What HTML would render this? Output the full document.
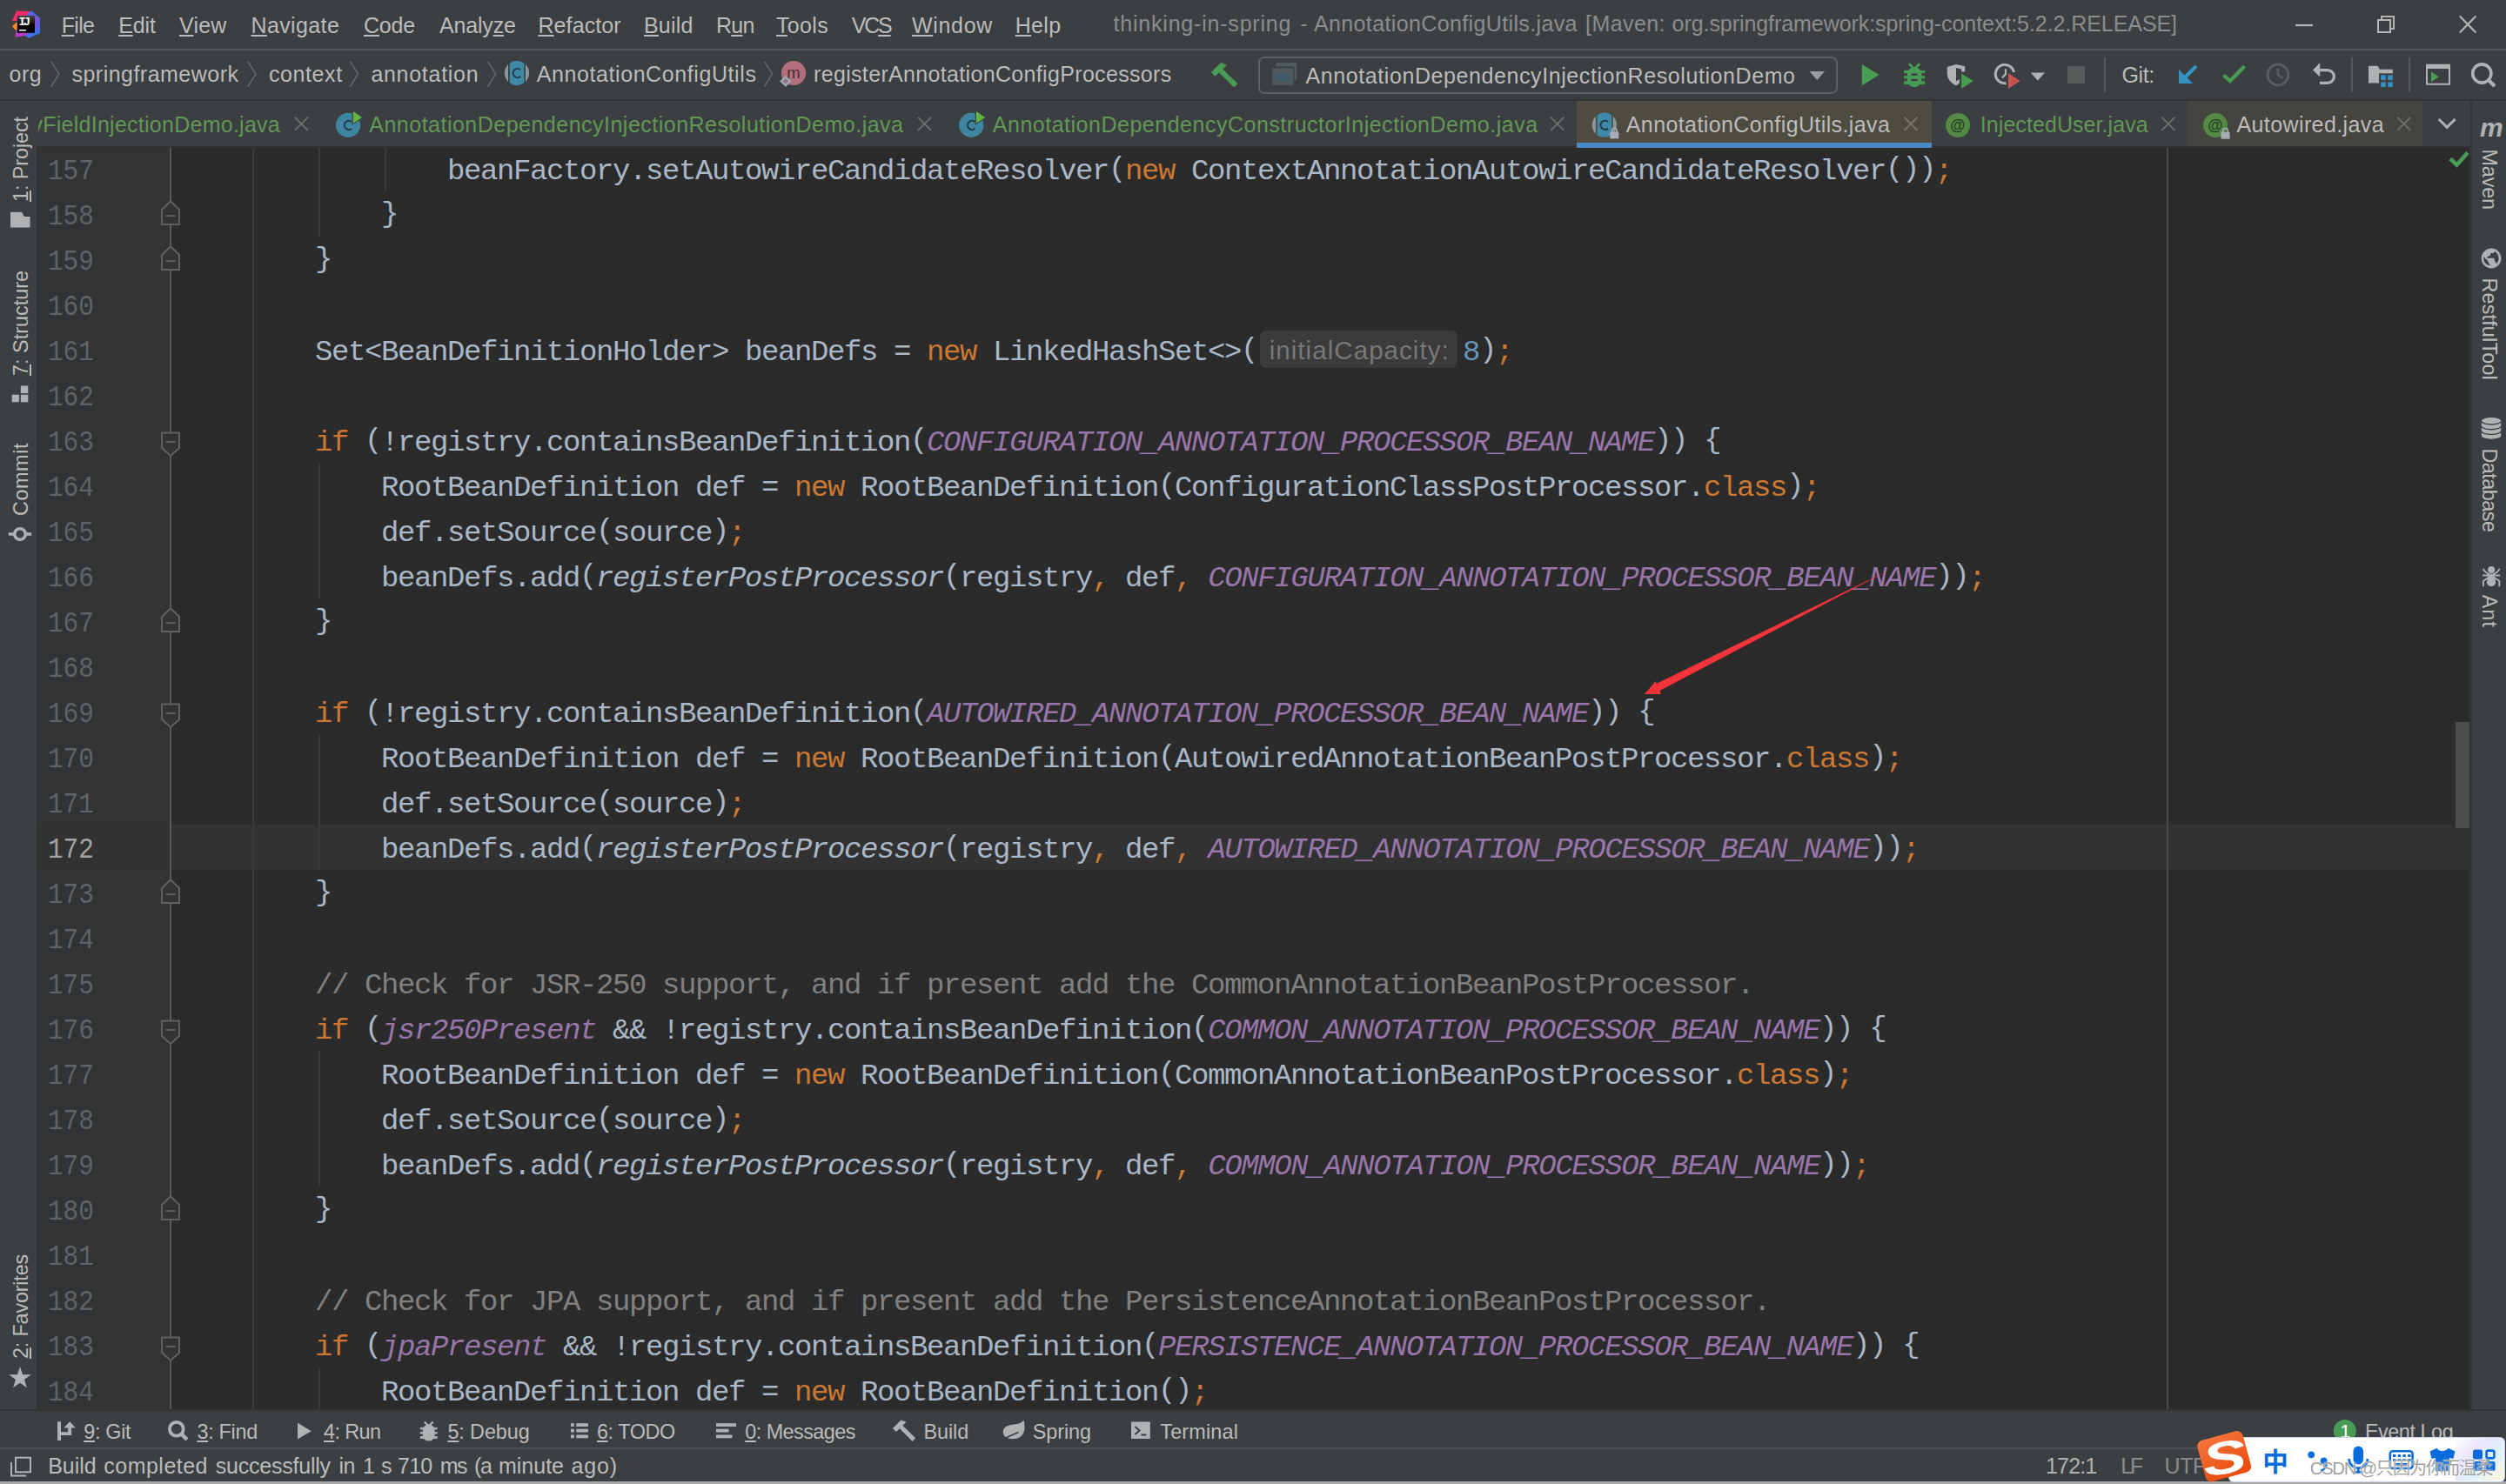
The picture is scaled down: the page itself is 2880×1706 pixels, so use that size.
<!DOCTYPE html>
<html lang="en"><head><meta charset="utf-8"><title>thinking-in-spring - AnnotationConfigUtils.java</title>
<style>
html,body{margin:0;padding:0;}
body{width:2880px;height:1706px;overflow:hidden;background:#3c3f41;position:relative;font-family:"Liberation Sans", sans-serif;}
.t{position:absolute;white-space:pre;font-family:"Liberation Sans", sans-serif;z-index:3;}
.z3{z-index:3;}.z4{z-index:4;}.z5{z-index:5;}
.a{position:absolute;}
u{text-decoration:underline;text-decoration-thickness:2px;text-underline-offset:1.5px;}
.code{position:absolute;white-space:pre;font-family:"Liberation Mono", monospace;color:#a9b7c6;}
.k{color:#cc7832;}
.c{color:#9876aa;font-style:italic;}
.i{font-style:italic;}
.m{color:#808080;}
.n{color:#6897bb;}
.ln{position:absolute;white-space:pre;font-family:"Liberation Mono", monospace;color:#606366;}
svg{position:absolute;overflow:visible;}
.rot{position:absolute;z-index:3;left:0;top:0;width:0;height:0;transform-origin:0 0;}
.code b{font-weight:normal;position:relative;top:-3px;}

</style></head><body>
<div class="a" style="left:0px;top:56px;width:2880px;height:2px;background:#535556;"></div>
<div class="a" style="left:0px;top:114px;width:2880px;height:2px;background:#323232;"></div>
<div class="a" style="left:42px;top:116px;width:2799px;height:52px;background:#3c3f41;"></div>
<div class="a" style="left:42px;top:168px;width:2799px;height:1452px;background:#2b2b2b;"></div>
<div class="a" style="left:42px;top:168px;width:154px;height:1452px;background:#313335;"></div>
<div class="a" style="left:196px;top:948px;width:2645px;height:52px;background:#323232;"></div>
<div class="a" style="left:42px;top:948px;width:154px;height:52px;background:#323232;"></div>
<div class="a" style="left:195px;top:170px;width:2px;height:1450px;background:#585858;"></div>
<div class="a" style="left:2490px;top:170px;width:2px;height:1450px;background:#4a4a4a;"></div>
<div class="a" style="left:2838px;top:168px;width:3px;height:1452px;background:#313335;"></div>
<div class="a" style="left:2822px;top:830px;width:16px;height:122px;background:#4e4e4e;"></div>
<div class="a" style="left:0px;top:116px;width:42px;height:1504px;background:#3c3f41;"></div>
<div class="a" style="left:2841px;top:116px;width:39px;height:1504px;background:#3c3f41;"></div>
<div class="a" style="left:2839px;top:116px;width:2px;height:52px;background:#323232;"></div>
<div class="a" style="left:0px;top:1620px;width:2880px;height:2px;background:#323232;"></div>
<div class="a" style="left:0px;top:1664px;width:2880px;height:2px;background:#4a4c4d;"></div>
<div class="a" style="left:0px;top:1703px;width:2880px;height:3px;background:#a9a9a9;"></div>
<div class="a" style="left:290px;top:170px;width:2px;height:1450px;background:#3b3b3b;"></div>
<div class="a" style="left:366px;top:170px;width:2px;height:102px;background:#393939;"></div>
<div class="a" style="left:442px;top:170px;width:2px;height:50px;background:#393939;"></div>
<div class="a" style="left:366px;top:532px;width:2px;height:156px;background:#393939;"></div>
<div class="a" style="left:366px;top:844px;width:2px;height:156px;background:#393939;"></div>
<div class="a" style="left:366px;top:1208px;width:2px;height:156px;background:#393939;"></div>
<div class="a" style="left:366px;top:1572px;width:2px;height:48px;background:#393939;"></div>
<div class="code" style="left:514.00px;top:170.94px;height:52px;line-height:52px;font-size:34.0px;letter-spacing:-1.4033px;">beanFactory.setAutowireCandidateResolver<b>(</b><span class="k">new</span> ContextAnnotationAutowireCandidateResolver<b>())</b><span class="k">;</span></div>
<div class="code" style="left:438.00px;top:222.94px;height:52px;line-height:52px;font-size:34.0px;letter-spacing:-1.4033px;"><b>}</b></div>
<div class="code" style="left:362.00px;top:274.94px;height:52px;line-height:52px;font-size:34.0px;letter-spacing:-1.4033px;"><b>}</b></div>
<div class="code" style="left:362.00px;top:482.94px;height:52px;line-height:52px;font-size:34.0px;letter-spacing:-1.4033px;"><span class="k">if</span> <b>(</b>!registry.containsBeanDefinition<b>(</b><span class="c">CONFIGURATION_ANNOTATION_PROCESSOR_BEAN_NAME</span><b>))</b> <b>{</b></div>
<div class="code" style="left:438.00px;top:534.94px;height:52px;line-height:52px;font-size:34.0px;letter-spacing:-1.4033px;">RootBeanDefinition def = <span class="k">new</span> RootBeanDefinition<b>(</b>ConfigurationClassPostProcessor.<span class="k">class</span><b>)</b><span class="k">;</span></div>
<div class="code" style="left:438.00px;top:586.94px;height:52px;line-height:52px;font-size:34.0px;letter-spacing:-1.4033px;">def.setSource<b>(</b>source<b>)</b><span class="k">;</span></div>
<div class="code" style="left:438.00px;top:638.94px;height:52px;line-height:52px;font-size:34.0px;letter-spacing:-1.4033px;">beanDefs.add<b>(</b><span class="i">registerPostProcessor</span><b>(</b>registry<span class="k">,</span> def<span class="k">,</span> <span class="c">CONFIGURATION_ANNOTATION_PROCESSOR_BEAN_NAME</span><b>))</b><span class="k">;</span></div>
<div class="code" style="left:362.00px;top:690.94px;height:52px;line-height:52px;font-size:34.0px;letter-spacing:-1.4033px;"><b>}</b></div>
<div class="code" style="left:362.00px;top:794.94px;height:52px;line-height:52px;font-size:34.0px;letter-spacing:-1.4033px;"><span class="k">if</span> <b>(</b>!registry.containsBeanDefinition<b>(</b><span class="c">AUTOWIRED_ANNOTATION_PROCESSOR_BEAN_NAME</span><b>))</b> <b>{</b></div>
<div class="code" style="left:438.00px;top:846.94px;height:52px;line-height:52px;font-size:34.0px;letter-spacing:-1.4033px;">RootBeanDefinition def = <span class="k">new</span> RootBeanDefinition<b>(</b>AutowiredAnnotationBeanPostProcessor.<span class="k">class</span><b>)</b><span class="k">;</span></div>
<div class="code" style="left:438.00px;top:898.94px;height:52px;line-height:52px;font-size:34.0px;letter-spacing:-1.4033px;">def.setSource<b>(</b>source<b>)</b><span class="k">;</span></div>
<div class="code" style="left:438.00px;top:950.94px;height:52px;line-height:52px;font-size:34.0px;letter-spacing:-1.4033px;">beanDefs.add<b>(</b><span class="i">registerPostProcessor</span><b>(</b>registry<span class="k">,</span> def<span class="k">,</span> <span class="c">AUTOWIRED_ANNOTATION_PROCESSOR_BEAN_NAME</span><b>))</b><span class="k">;</span></div>
<div class="code" style="left:362.00px;top:1002.94px;height:52px;line-height:52px;font-size:34.0px;letter-spacing:-1.4033px;"><b>}</b></div>
<div class="code" style="left:362.00px;top:1106.94px;height:52px;line-height:52px;font-size:34.0px;letter-spacing:-1.4033px;"><span class="m">// Check for JSR-250 support, and if present add the CommonAnnotationBeanPostProcessor.</span></div>
<div class="code" style="left:362.00px;top:1158.94px;height:52px;line-height:52px;font-size:34.0px;letter-spacing:-1.4033px;"><span class="k">if</span> <b>(</b><span class="c">jsr250Present</span> &amp;&amp; !registry.containsBeanDefinition<b>(</b><span class="c">COMMON_ANNOTATION_PROCESSOR_BEAN_NAME</span><b>))</b> <b>{</b></div>
<div class="code" style="left:438.00px;top:1210.94px;height:52px;line-height:52px;font-size:34.0px;letter-spacing:-1.4033px;">RootBeanDefinition def = <span class="k">new</span> RootBeanDefinition<b>(</b>CommonAnnotationBeanPostProcessor.<span class="k">class</span><b>)</b><span class="k">;</span></div>
<div class="code" style="left:438.00px;top:1262.94px;height:52px;line-height:52px;font-size:34.0px;letter-spacing:-1.4033px;">def.setSource<b>(</b>source<b>)</b><span class="k">;</span></div>
<div class="code" style="left:438.00px;top:1314.94px;height:52px;line-height:52px;font-size:34.0px;letter-spacing:-1.4033px;">beanDefs.add<b>(</b><span class="i">registerPostProcessor</span><b>(</b>registry<span class="k">,</span> def<span class="k">,</span> <span class="c">COMMON_ANNOTATION_PROCESSOR_BEAN_NAME</span><b>))</b><span class="k">;</span></div>
<div class="code" style="left:362.00px;top:1366.94px;height:52px;line-height:52px;font-size:34.0px;letter-spacing:-1.4033px;"><b>}</b></div>
<div class="code" style="left:362.00px;top:1470.94px;height:52px;line-height:52px;font-size:34.0px;letter-spacing:-1.4033px;"><span class="m">// Check for JPA support, and if present add the PersistenceAnnotationBeanPostProcessor.</span></div>
<div class="code" style="left:362.00px;top:1522.94px;height:52px;line-height:52px;font-size:34.0px;letter-spacing:-1.4033px;"><span class="k">if</span> <b>(</b><span class="c">jpaPresent</span> &amp;&amp; !registry.containsBeanDefinition<b>(</b><span class="c">PERSISTENCE_ANNOTATION_PROCESSOR_BEAN_NAME</span><b>))</b> <b>{</b></div>
<div class="code" style="left:438.00px;top:1574.94px;height:52px;line-height:52px;font-size:34.0px;letter-spacing:-1.4033px;">RootBeanDefinition def = <span class="k">new</span> RootBeanDefinition<b>()</b><span class="k">;</span></div>
<div class="code" style="left:362.00px;top:378.94px;height:52px;line-height:52px;font-size:34.0px;letter-spacing:-1.4033px;">Set&lt;BeanDefinitionHolder&gt; beanDefs = <span class="k">new</span> LinkedHashSet&lt;&gt;<b>(</b></div>
<div class="a" style="left:1448px;top:380px;width:227px;height:43px;border-radius:7px;background:#3b3b3b;"></div>
<span id="t0" class="t " style="left:1458.70px;top:386.10px;font-size:29.5px;line-height:33.895px;color:#787878;letter-spacing:1.056px;">initialCapacity:</span>
<div class="code" style="left:1681.00px;top:378.94px;height:52px;line-height:52px;font-size:34.0px;letter-spacing:-1.4033px;"><span class="n">8</span><b>)</b><span class="k">;</span></div>
<div class="ln" style="left:54.6px;top:170.94px;height:52px;line-height:52px;font-size:34.0px;color:#606366;transform:scaleX(0.863);transform-origin:0 0;">157</div>
<div class="ln" style="left:54.6px;top:222.94px;height:52px;line-height:52px;font-size:34.0px;color:#606366;transform:scaleX(0.863);transform-origin:0 0;">158</div>
<div class="ln" style="left:54.6px;top:274.94px;height:52px;line-height:52px;font-size:34.0px;color:#606366;transform:scaleX(0.863);transform-origin:0 0;">159</div>
<div class="ln" style="left:54.6px;top:326.94px;height:52px;line-height:52px;font-size:34.0px;color:#606366;transform:scaleX(0.863);transform-origin:0 0;">160</div>
<div class="ln" style="left:54.6px;top:378.94px;height:52px;line-height:52px;font-size:34.0px;color:#606366;transform:scaleX(0.863);transform-origin:0 0;">161</div>
<div class="ln" style="left:54.6px;top:430.94px;height:52px;line-height:52px;font-size:34.0px;color:#606366;transform:scaleX(0.863);transform-origin:0 0;">162</div>
<div class="ln" style="left:54.6px;top:482.94px;height:52px;line-height:52px;font-size:34.0px;color:#606366;transform:scaleX(0.863);transform-origin:0 0;">163</div>
<div class="ln" style="left:54.6px;top:534.94px;height:52px;line-height:52px;font-size:34.0px;color:#606366;transform:scaleX(0.863);transform-origin:0 0;">164</div>
<div class="ln" style="left:54.6px;top:586.94px;height:52px;line-height:52px;font-size:34.0px;color:#606366;transform:scaleX(0.863);transform-origin:0 0;">165</div>
<div class="ln" style="left:54.6px;top:638.94px;height:52px;line-height:52px;font-size:34.0px;color:#606366;transform:scaleX(0.863);transform-origin:0 0;">166</div>
<div class="ln" style="left:54.6px;top:690.94px;height:52px;line-height:52px;font-size:34.0px;color:#606366;transform:scaleX(0.863);transform-origin:0 0;">167</div>
<div class="ln" style="left:54.6px;top:742.94px;height:52px;line-height:52px;font-size:34.0px;color:#606366;transform:scaleX(0.863);transform-origin:0 0;">168</div>
<div class="ln" style="left:54.6px;top:794.94px;height:52px;line-height:52px;font-size:34.0px;color:#606366;transform:scaleX(0.863);transform-origin:0 0;">169</div>
<div class="ln" style="left:54.6px;top:846.94px;height:52px;line-height:52px;font-size:34.0px;color:#606366;transform:scaleX(0.863);transform-origin:0 0;">170</div>
<div class="ln" style="left:54.6px;top:898.94px;height:52px;line-height:52px;font-size:34.0px;color:#606366;transform:scaleX(0.863);transform-origin:0 0;">171</div>
<div class="ln" style="left:54.6px;top:950.94px;height:52px;line-height:52px;font-size:34.0px;color:#a4a3a3;transform:scaleX(0.863);transform-origin:0 0;">172</div>
<div class="ln" style="left:54.6px;top:1002.94px;height:52px;line-height:52px;font-size:34.0px;color:#606366;transform:scaleX(0.863);transform-origin:0 0;">173</div>
<div class="ln" style="left:54.6px;top:1054.94px;height:52px;line-height:52px;font-size:34.0px;color:#606366;transform:scaleX(0.863);transform-origin:0 0;">174</div>
<div class="ln" style="left:54.6px;top:1106.94px;height:52px;line-height:52px;font-size:34.0px;color:#606366;transform:scaleX(0.863);transform-origin:0 0;">175</div>
<div class="ln" style="left:54.6px;top:1158.94px;height:52px;line-height:52px;font-size:34.0px;color:#606366;transform:scaleX(0.863);transform-origin:0 0;">176</div>
<div class="ln" style="left:54.6px;top:1210.94px;height:52px;line-height:52px;font-size:34.0px;color:#606366;transform:scaleX(0.863);transform-origin:0 0;">177</div>
<div class="ln" style="left:54.6px;top:1262.94px;height:52px;line-height:52px;font-size:34.0px;color:#606366;transform:scaleX(0.863);transform-origin:0 0;">178</div>
<div class="ln" style="left:54.6px;top:1314.94px;height:52px;line-height:52px;font-size:34.0px;color:#606366;transform:scaleX(0.863);transform-origin:0 0;">179</div>
<div class="ln" style="left:54.6px;top:1366.94px;height:52px;line-height:52px;font-size:34.0px;color:#606366;transform:scaleX(0.863);transform-origin:0 0;">180</div>
<div class="ln" style="left:54.6px;top:1418.94px;height:52px;line-height:52px;font-size:34.0px;color:#606366;transform:scaleX(0.863);transform-origin:0 0;">181</div>
<div class="ln" style="left:54.6px;top:1470.94px;height:52px;line-height:52px;font-size:34.0px;color:#606366;transform:scaleX(0.863);transform-origin:0 0;">182</div>
<div class="ln" style="left:54.6px;top:1522.94px;height:52px;line-height:52px;font-size:34.0px;color:#606366;transform:scaleX(0.863);transform-origin:0 0;">183</div>
<div class="ln" style="left:54.6px;top:1574.94px;height:52px;line-height:52px;font-size:34.0px;color:#606366;transform:scaleX(0.863);transform-origin:0 0;">184</div>
<svg class="a" style="left:0;top:0" width="2880" height="1706"><path d="M186,258 H206 V241 L196,231.5 L186,241 Z" fill="#313335" stroke="#606060" stroke-width="2"/><path d="M190.5,248.2 H201.5" stroke="#606060" stroke-width="2"/></svg>
<svg class="a" style="left:0;top:0" width="2880" height="1706"><path d="M186,310 H206 V293 L196,283.5 L186,293 Z" fill="#313335" stroke="#606060" stroke-width="2"/><path d="M190.5,300.2 H201.5" stroke="#606060" stroke-width="2"/></svg>
<svg class="a" style="left:0;top:0" width="2880" height="1706"><path d="M186,726 H206 V709 L196,699.5 L186,709 Z" fill="#313335" stroke="#606060" stroke-width="2"/><path d="M190.5,716.2 H201.5" stroke="#606060" stroke-width="2"/></svg>
<svg class="a" style="left:0;top:0" width="2880" height="1706"><path d="M186,1038 H206 V1021 L196,1011.5 L186,1021 Z" fill="#313335" stroke="#606060" stroke-width="2"/><path d="M190.5,1028.2 H201.5" stroke="#606060" stroke-width="2"/></svg>
<svg class="a" style="left:0;top:0" width="2880" height="1706"><path d="M186,1402 H206 V1385 L196,1375.5 L186,1385 Z" fill="#313335" stroke="#606060" stroke-width="2"/><path d="M190.5,1392.2 H201.5" stroke="#606060" stroke-width="2"/></svg>
<svg class="a" style="left:0;top:0" width="2880" height="1706"><path d="M186,497.5 H206 V515 L196,524 L186,515 Z" fill="#313335" stroke="#606060" stroke-width="2"/><path d="M190.5,508 H201.5" stroke="#606060" stroke-width="2"/></svg>
<svg class="a" style="left:0;top:0" width="2880" height="1706"><path d="M186,809.5 H206 V827 L196,836 L186,827 Z" fill="#313335" stroke="#606060" stroke-width="2"/><path d="M190.5,820 H201.5" stroke="#606060" stroke-width="2"/></svg>
<svg class="a" style="left:0;top:0" width="2880" height="1706"><path d="M186,1173.5 H206 V1191 L196,1200 L186,1191 Z" fill="#313335" stroke="#606060" stroke-width="2"/><path d="M190.5,1184 H201.5" stroke="#606060" stroke-width="2"/></svg>
<svg class="a" style="left:0;top:0" width="2880" height="1706"><path d="M186,1537.5 H206 V1555 L196,1564 L186,1555 Z" fill="#313335" stroke="#606060" stroke-width="2"/><path d="M190.5,1548 H201.5" stroke="#606060" stroke-width="2"/></svg>
<svg class="a" style="left:0;top:0" width="2880" height="1706"><path d="M2172,655 L1903.5,786 L1902.7,783 L1890,798 L1908.8,798 L1907.5,794 Z" fill="#f5333b"/></svg>
<span id="t1" class="t " style="left:70.70px;top:15.08px;font-size:25.0px;line-height:28.725px;color:#bbbbbb;letter-spacing:-0.674px;"><u>F</u>ile</span>
<span id="t2" class="t " style="left:136.20px;top:15.08px;font-size:25.0px;line-height:28.725px;color:#bbbbbb;letter-spacing:-0.148px;"><u>E</u>dit</span>
<span id="t3" class="t " style="left:206.00px;top:15.08px;font-size:25.0px;line-height:28.725px;color:#bbbbbb;letter-spacing:0.213px;"><u>V</u>iew</span>
<span id="t4" class="t " style="left:288.50px;top:15.08px;font-size:25.0px;line-height:28.725px;color:#bbbbbb;letter-spacing:0.377px;"><u>N</u>avigate</span>
<span id="t5" class="t " style="left:418.00px;top:15.08px;font-size:25.0px;line-height:28.725px;color:#bbbbbb;letter-spacing:-0.195px;"><u>C</u>ode</span>
<span id="t6" class="t " style="left:504.90px;top:15.08px;font-size:25.0px;line-height:28.725px;color:#bbbbbb;letter-spacing:-0.150px;">Analy<u>z</u>e</span>
<span id="t7" class="t " style="left:618.40px;top:15.08px;font-size:25.0px;line-height:28.725px;color:#bbbbbb;letter-spacing:0.112px;"><u>R</u>efactor</span>
<span id="t8" class="t " style="left:740.00px;top:15.08px;font-size:25.0px;line-height:28.725px;color:#bbbbbb;letter-spacing:0.178px;"><u>B</u>uild</span>
<span id="t9" class="t " style="left:823.00px;top:15.08px;font-size:25.0px;line-height:28.725px;color:#bbbbbb;letter-spacing:-0.725px;">R<u>u</u>n</span>
<span id="t10" class="t " style="left:892.00px;top:15.08px;font-size:25.0px;line-height:28.725px;color:#bbbbbb;letter-spacing:0.325px;"><u>T</u>ools</span>
<span id="t11" class="t " style="left:978.70px;top:15.08px;font-size:25.0px;line-height:28.725px;color:#bbbbbb;letter-spacing:-2.174px;">VC<u>S</u></span>
<span id="t12" class="t " style="left:1048.00px;top:15.08px;font-size:25.0px;line-height:28.725px;color:#bbbbbb;letter-spacing:0.677px;"><u>W</u>indow</span>
<span id="t13" class="t " style="left:1166.70px;top:15.08px;font-size:25.0px;line-height:28.725px;color:#bbbbbb;letter-spacing:0.341px;"><u>H</u>elp</span>
<span id="t14" class="t " style="left:1279.50px;top:13.17px;font-size:25.0px;line-height:28.725px;color:#8c8c8c;letter-spacing:0.796px;">thinking-in-spring</span>
<span id="t15" class="t " style="left:1494.20px;top:13.17px;font-size:25.0px;line-height:28.725px;color:#8c8c8c;letter-spacing:-1.528px;">-</span>
<span id="t16" class="t " style="left:1510.00px;top:13.17px;font-size:25.0px;line-height:28.725px;color:#8c8c8c;letter-spacing:0.372px;">AnnotationConfigUtils.java</span>
<span id="t17" class="t " style="left:1822.00px;top:13.17px;font-size:25.0px;line-height:28.725px;color:#8c8c8c;letter-spacing:0.438px;">[Maven:</span>
<span id="t18" class="t " style="left:1921.60px;top:13.17px;font-size:25.0px;line-height:28.725px;color:#8c8c8c;letter-spacing:-0.065px;">org.springframework:spring-context:5.2.2.RELEASE]</span>
<span id="t19" class="t " style="left:21.40px;top:17.59px;font-size:13.4px;line-height:15.397px;color:#fff;letter-spacing:-2.539px;font-family:'Liberation Mono',monospace;font-weight:bold;">IJ</span>
<span id="t20" class="t " style="left:10.60px;top:70.97px;font-size:25.0px;line-height:28.725px;color:#bbbbbb;letter-spacing:0.520px;">org</span>
<span id="t21" class="t " style="left:82.50px;top:70.97px;font-size:25.0px;line-height:28.725px;color:#bbbbbb;letter-spacing:0.475px;">springframework</span>
<span id="t22" class="t " style="left:309.00px;top:70.97px;font-size:25.0px;line-height:28.725px;color:#bbbbbb;letter-spacing:0.584px;">context</span>
<span id="t23" class="t " style="left:426.40px;top:70.97px;font-size:25.0px;line-height:28.725px;color:#bbbbbb;letter-spacing:0.712px;">annotation</span>
<span id="t24" class="t " style="left:616.70px;top:70.97px;font-size:25.0px;line-height:28.725px;color:#bbbbbb;letter-spacing:0.589px;">AnnotationConfigUtils</span>
<span id="t25" class="t " style="left:935.00px;top:70.97px;font-size:25.0px;line-height:28.725px;color:#bbbbbb;letter-spacing:0.335px;">registerAnnotationConfigProcessors</span>
<span id="t26" class="t " style="left:904.30px;top:72.87px;font-size:18.6px;line-height:21.371px;color:#4a2832;letter-spacing:0.200px;">m</span>
<div class="a" style="left:1446px;top:65px;width:662px;height:39px;border:2px solid #5e6060;border-radius:7px;"></div>
<span id="t27" class="t " style="left:1500.50px;top:73.28px;font-size:25.0px;line-height:28.725px;color:#bbbbbb;letter-spacing:0.587px;">AnnotationDependencyInjectionResolutionDemo</span>
<div class="a" style="left:2418px;top:66px;width:2px;height:40px;background:#555759;"></div>
<span id="t28" class="t " style="left:2438.40px;top:71.58px;font-size:25.0px;line-height:28.725px;color:#bbbbbb;letter-spacing:-0.327px;">Git:</span>
<div class="a" style="left:2702px;top:66px;width:2px;height:40px;background:#555759;"></div>
<div class="a" style="left:2768px;top:66px;width:2px;height:40px;background:#555759;"></div>
<div class="a" style="left:1812px;top:116px;width:408px;height:48px;background:#4e4b41;"></div>
<div class="a" style="left:1812px;top:164px;width:408px;height:6px;background:#4a88c7;"></div>
<div class="a" style="left:2514px;top:116px;width:270px;height:52px;background:#45443e;"></div>
<div class="a" style="left:42px;top:168px;width:2799px;height:2px;background:#323232;"></div>
<div class="a" style="left:1812px;top:164px;width:408px;height:6px;background:#4a88c7;"></div>
<span id="t29" class="t " style="left:36.50px;top:129.38px;font-size:25.0px;line-height:28.725px;color:#629755;letter-spacing:0.258px;">yFieldInjectionDemo.java</span>
<span id="t30" class="t " style="left:424.30px;top:129.38px;font-size:25.0px;line-height:28.725px;color:#629755;letter-spacing:0.490px;">AnnotationDependencyInjectionResolutionDemo.java</span>
<span id="t31" class="t " style="left:1140.80px;top:129.38px;font-size:25.0px;line-height:28.725px;color:#629755;letter-spacing:0.511px;">AnnotationDependencyConstructorInjectionDemo.java</span>
<span id="t32" class="t " style="left:1868.80px;top:129.38px;font-size:25.0px;line-height:28.725px;color:#bbbbbb;letter-spacing:0.395px;">AnnotationConfigUtils.java</span>
<span id="t33" class="t " style="left:2241.20px;top:133.56px;font-size:17.5px;line-height:20.108px;color:#26401f;letter-spacing:0.522px;font-weight:bold;">@</span>
<span id="t34" class="t " style="left:2275.80px;top:129.38px;font-size:25.0px;line-height:28.725px;color:#629755;letter-spacing:0.066px;">InjectedUser.java</span>
<span id="t35" class="t " style="left:2537.20px;top:133.56px;font-size:17.5px;line-height:20.108px;color:#26401f;letter-spacing:0.522px;font-weight:bold;">@</span>
<span id="t36" class="t " style="left:2570.50px;top:129.38px;font-size:25.0px;line-height:28.725px;color:#bbbbbb;letter-spacing:0.394px;">Autowired.java</span>
<div class="a" style="left:0px;top:116px;width:44px;height:52px;background:#3c3f41;z-index:3;"></div>
<div class="rot" style="transform:rotate(-90deg)"><span id="t37" class="t " style="left:-232.00px;top:11.42px;font-size:23.4px;line-height:26.887px;color:#bbbbbb;letter-spacing:-0.081px;"><u>1</u>: Project</span></div>
<div class="rot" style="transform:rotate(-90deg)"><span id="t38" class="t " style="left:-432.00px;top:11.42px;font-size:23.4px;line-height:26.887px;color:#bbbbbb;letter-spacing:0.007px;"><u>7</u>: Structure</span></div>
<div class="rot" style="transform:rotate(-90deg)"><span id="t39" class="t " style="left:-593.00px;top:11.42px;font-size:23.4px;line-height:26.887px;color:#bbbbbb;letter-spacing:0.570px;">Commit</span></div>
<div class="rot" style="transform:rotate(-90deg)"><span id="t40" class="t " style="left:-1562.00px;top:11.42px;font-size:23.4px;line-height:26.887px;color:#bbbbbb;letter-spacing:-0.184px;"><u>2</u>: Favorites</span></div>
<span id="t41" class="t " style="left:2850.00px;top:130.45px;font-size:30px;line-height:34.470px;color:#afb1b3;letter-spacing:-0.688px;font-weight:bold;font-style:italic;">m</span>
<div class="rot" style="transform:rotate(90deg)"><span id="t42" class="t " style="left:171.50px;top:-2873.58px;font-size:23.4px;line-height:26.887px;color:#bbbbbb;letter-spacing:-0.144px;">Maven</span></div>
<div class="rot" style="transform:rotate(90deg)"><span id="t43" class="t " style="left:319.40px;top:-2873.58px;font-size:23.4px;line-height:26.887px;color:#bbbbbb;letter-spacing:0.171px;">RestfulTool</span></div>
<div class="rot" style="transform:rotate(90deg)"><span id="t44" class="t " style="left:515.50px;top:-2873.58px;font-size:23.4px;line-height:26.887px;color:#bbbbbb;letter-spacing:-0.530px;">Database</span></div>
<div class="rot" style="transform:rotate(90deg)"><span id="t45" class="t " style="left:683.70px;top:-2873.58px;font-size:23.4px;line-height:26.887px;color:#bbbbbb;letter-spacing:1.064px;">Ant</span></div>
<span id="t46" class="t " style="left:96.30px;top:1633.02px;font-size:23.4px;line-height:26.887px;color:#bbbbbb;letter-spacing:-0.318px;"><u>9</u>: Git</span>
<span id="t47" class="t " style="left:226.40px;top:1633.02px;font-size:23.4px;line-height:26.887px;color:#bbbbbb;letter-spacing:-0.274px;"><u>3</u>: Find</span>
<span id="t48" class="t " style="left:372.00px;top:1633.02px;font-size:23.4px;line-height:26.887px;color:#bbbbbb;letter-spacing:-0.590px;"><u>4</u>: Run</span>
<span id="t49" class="t " style="left:514.40px;top:1633.02px;font-size:23.4px;line-height:26.887px;color:#bbbbbb;letter-spacing:-0.094px;"><u>5</u>: Debug</span>
<span id="t50" class="t " style="left:686.00px;top:1633.02px;font-size:23.4px;line-height:26.887px;color:#bbbbbb;letter-spacing:-0.407px;"><u>6</u>: TODO</span>
<span id="t51" class="t " style="left:856.30px;top:1633.02px;font-size:23.4px;line-height:26.887px;color:#bbbbbb;letter-spacing:-0.557px;"><u>0</u>: Messages</span>
<span id="t52" class="t " style="left:1061.50px;top:1633.02px;font-size:23.4px;line-height:26.887px;color:#bbbbbb;letter-spacing:-0.063px;">Build</span>
<span id="t53" class="t " style="left:1186.80px;top:1633.02px;font-size:23.4px;line-height:26.887px;color:#bbbbbb;letter-spacing:-0.071px;">Spring</span>
<span id="t54" class="t " style="left:1333.30px;top:1633.02px;font-size:23.4px;line-height:26.887px;color:#bbbbbb;letter-spacing:0.164px;">Terminal</span>
<span id="t55" class="t " style="left:2689.30px;top:1633.29px;font-size:22px;line-height:25.278px;color:#ffffff;letter-spacing:-1.750px;">1</span>
<span id="t56" class="t " style="left:2717.90px;top:1633.02px;font-size:23.4px;line-height:26.887px;color:#bbbbbb;letter-spacing:-0.449px;">Event Log</span>
<span id="t57" class="t " style="left:55.20px;top:1670.67px;font-size:25.0px;line-height:28.725px;color:#bbbbbb;letter-spacing:-0.039px;">Build</span>
<span id="t58" class="t " style="left:119.30px;top:1670.67px;font-size:25.0px;line-height:28.725px;color:#bbbbbb;letter-spacing:0.482px;">completed</span>
<span id="t59" class="t " style="left:247.70px;top:1670.67px;font-size:25.0px;line-height:28.725px;color:#bbbbbb;letter-spacing:-0.214px;">successfully</span>
<span id="t60" class="t " style="left:389.40px;top:1670.67px;font-size:25.0px;line-height:28.725px;color:#bbbbbb;letter-spacing:-0.434px;">in</span>
<span id="t61" class="t " style="left:417.00px;top:1670.67px;font-size:25.0px;line-height:28.725px;color:#bbbbbb;letter-spacing:-3.306px;">1</span>
<span id="t62" class="t " style="left:438.00px;top:1670.67px;font-size:25.0px;line-height:28.725px;color:#bbbbbb;letter-spacing:-3.500px;">s</span>
<span id="t63" class="t " style="left:457.00px;top:1670.67px;font-size:25.0px;line-height:28.725px;color:#bbbbbb;letter-spacing:-0.740px;">710</span>
<span id="t64" class="t " style="left:505.70px;top:1670.67px;font-size:25.0px;line-height:28.725px;color:#bbbbbb;letter-spacing:-1.514px;">ms</span>
<span id="t65" class="t " style="left:545.00px;top:1670.67px;font-size:25.0px;line-height:28.725px;color:#bbbbbb;letter-spacing:-1.267px;">(a</span>
<span id="t66" class="t " style="left:573.00px;top:1670.67px;font-size:25.0px;line-height:28.725px;color:#bbbbbb;letter-spacing:-0.008px;">minute</span>
<span id="t67" class="t " style="left:656.60px;top:1670.67px;font-size:25.0px;line-height:28.725px;color:#bbbbbb;letter-spacing:0.788px;">ago)</span>
<span id="t68" class="t " style="left:2351.00px;top:1670.97px;font-size:25.0px;line-height:28.725px;color:#b0b0b0;letter-spacing:-0.832px;">172:1</span>
<span id="t69" class="t " style="left:2437.30px;top:1670.97px;font-size:25.0px;line-height:28.725px;color:#8a8a8a;letter-spacing:-3.094px;">LF</span>
<span id="t70" class="t " style="left:2487.60px;top:1670.97px;font-size:25.0px;line-height:28.725px;color:#8a8a8a;letter-spacing:-0.486px;">UTF-8</span>
<svg class="a" style="left:0;top:0" width="2880" height="1706" viewBox="0 0 2880 1706"><path d="M2638,29 H2658" stroke="#b4b4b4" stroke-width="2.2" fill="none"/><path d="M2733,23 H2747 V37 H2733 Z M2737,22 V19 H2751 V33 H2748" stroke="#b4b4b4" stroke-width="2" fill="none"/><path d="M2826.8,18.6 L2845.4,37.4 M2845.4,18.6 L2826.8,37.4" stroke="#b4b4b4" stroke-width="2.2" fill="none"/><g>
<path d="M14,24 L19,12.5 L34,13 L30,24 Z" fill="#fc2a6b"/>
<path d="M30,18 L36,12 L46,21 L46,38 L33,44 L27,40 Z" fill="#3f6ff0"/>
<path d="M36,14 L46,22 L43,34 L34,26 Z" fill="#8a47d6" opacity=".75"/>
<path d="M14,30 L20,25 L22,34 L18,35 Z" fill="#fc8a1f"/>
<path d="M19,34 L34,38 L28,41 L17,43 Z" fill="#b63bc9"/>
<defs><linearGradient id="ijg" x1="0" y1="0" x2="0" y2="1"><stop offset="0" stop-color="#454545"/><stop offset=".6" stop-color="#000"/></linearGradient></defs><rect x="19.8" y="18" width="20.2" height="19.8" fill="url(#ijg)"/>
<rect x="22" y="34" width="8" height="1.5" fill="#fff"/>
</g><path d="M58.6,70.6 L67.8,85 L58.6,99.6" stroke="#5f6467" stroke-width="1.7" fill="none"/><path d="M284.8,70.6 L294,85 L284.8,99.6" stroke="#5f6467" stroke-width="1.7" fill="none"/><path d="M402.3,70.6 L411.5,85 L402.3,99.6" stroke="#5f6467" stroke-width="1.7" fill="none"/><path d="M560.5,70.6 L569.7,85 L560.5,99.6" stroke="#5f6467" stroke-width="1.7" fill="none"/><path d="M878.4,70.6 L887.6,85 L878.4,99.6" stroke="#5f6467" stroke-width="1.7" fill="none"/><clipPath id="cla"><rect x="585.8" y="69.9" width="16.5" height="28.2"/></clipPath><circle cx="594" cy="84" r="14.1" fill="#8a97a1"/><rect x="584" y="69.9" width="20" height="28.2" fill="#3c3f41"/><circle cx="594" cy="84" r="14.1" fill="#3f89a6" clip-path="url(#cla)"/><path d="M598.2,80.3 A5.1,5.1 0 1 0 598.2,87.9" stroke="#223b49" stroke-width="2.1" fill="none"/><circle cx="912" cy="84" r="14.1" fill="#b36e7c"/><path d="M902.9,86.6 L909.6,93.3 L902.9,100 L896.2,93.3 Z" fill="#9aa7b0"/><path d="M902.9,91 L905.2,93.3 L902.9,95.6 L900.6,93.3 Z" fill="#b36e7c" stroke="#4f4048" stroke-width=".6"/><g transform="translate(1392,72) scale(1.0)" fill="#499c54"><path d="M0,11 L11,0 L18,2.6 L13.2,7.4 L30.4,24.2 L26.2,28.4 L9.2,11.4 L4.4,15.8 Z"/></g><path d="M1466.2,74.2 H1487.8 V91.9" stroke="#4f585d" stroke-width="4.4" fill="none"/><rect x="1460.6" y="76.6" width="27" height="22.8" fill="#3c3f41"/><rect x="1462.2" y="78.3" width="24" height="19.5" fill="#4f595e"/><rect x="1466.2" y="84" width="16" height="10.2" fill="#3f5b69"/><path d="M2079.6,81.9 H2097 L2088.3,91.9 Z" fill="#9a9da0"/><path d="M2139.8,73.9 L2159.7,86 L2139.8,98.3 Z" fill="#499c54"/><g transform="translate(2188,72) scale(1.0)" fill="#499c54"><path d="M6,1.2 L12.1,7.4 L18.2,1.2" stroke="#499c54" stroke-width="2.7" fill="none"/><path d="M3.7,13.5 A8.4,8.6 0 0 1 20.5,13.5 V20 A8.4,8.2 0 0 1 3.7,20 Z"/><rect x="0" y="9" width="24.2" height="3"/><rect x="0" y="15.2" width="24.2" height="3"/><rect x="0" y="21.3" width="24.2" height="3.6"/><rect x="8.5" y="12.4" width="7.2" height="2.5" fill="#3c3f41"/><rect x="8.5" y="18.8" width="7.2" height="2.5" fill="#3c3f41"/></g><path d="M2237.8,77 L2248,73.9 L2258.2,76.3 V82.6 H2254.2 V79.4 L2248,78 V93.5 L2251.8,91 V95.8 L2248,98.4 C2241,95 2237.8,90 2237.8,84 Z" fill="#afb1b3"/><path d="M2254.1,84.4 L2267.7,93 L2254.1,102.1 Z" fill="#499c54"/><path d="M2314.5,83 A10.7,10.7 0 1 0 2305.6,95.7" stroke="#afb1b3" stroke-width="3" fill="none"/><path d="M2305,79.3 V85.3 L2300.8,89.5" stroke="#afb1b3" stroke-width="2.2" fill="none"/><path d="M2308,84 L2321.7,93 L2308,102 Z" fill="#c75450"/><path d="M2333.7,83.6 H2350 L2341.8,92.4 Z" fill="#afb1b3"/><rect x="2376" y="76" width="20" height="20" fill="#595b5d"/><path d="M2524,76 L2508,92" stroke="#3592c4" stroke-width="4" fill="none"/><path d="M2504,80 V96 H2520 Z" fill="#3592c4"/><path d="M2555.5,86.5 L2563,93 L2579.5,76" stroke="#499c54" stroke-width="4.2" fill="none"/><circle cx="2617.9" cy="85.9" r="11.8" stroke="#5a5d5f" stroke-width="3" fill="none"/><path d="M2617.9,78.5 V86 L2623.5,90" stroke="#5a5d5f" stroke-width="2.6" fill="none"/><path d="M2658,80.4 L2666.2,72.3 V88.5 Z" fill="#afb1b3"/><path d="M2665,80.6 H2675 A7.4,7.4 0 0 1 2675,95.4 H2666" stroke="#afb1b3" stroke-width="3.2" fill="none"/><path d="M2722,75.8 H2732.5 L2735,79.8 H2749.8 V95.5 H2722 Z" fill="#afb1b3"/><rect x="2734" y="84.3" width="18" height="17.7" fill="#3c3f41"/><rect x="2736.2" y="86.4" width="5.6" height="5.6" fill="#3592c4"/><rect x="2744.2" y="86.4" width="5.6" height="5.6" fill="#3592c4"/><rect x="2736.2" y="94.4" width="5.6" height="5.6" fill="#3592c4"/><rect x="2744.2" y="94.4" width="5.6" height="5.6" fill="#3592c4"/><path d="M2788,73.8 H2816 V97.8 H2788 Z M2790,79 V95.8 H2814 V79 Z" fill="#afb1b3" fill-rule="evenodd"/><path d="M2794,82.6 L2802.7,88.3 L2794,94.2 Z" fill="#499c54"/><circle cx="2852.3" cy="84.5" r="10.6" stroke="#afb1b3" stroke-width="3.6" fill="none"/><path d="M2859.6,91.8 L2867,99.1" stroke="#afb1b3" stroke-width="4.2" fill="none"/><path d="M338.8,134.8 l15,15 m0,-15 l-15,15" stroke="#6e6e6e" stroke-width="1.9" fill="none"/><circle cx="400.1" cy="143.9" r="14.1" fill="#3e86a0"/><path d="M404.3,140.20000000000002 A5.1,5.1 0 1 0 404.3,147.8" stroke="#223b49" stroke-width="2.1" fill="none"/><path d="M404.6,126.0 L418.0,135.1 L404.6,143.70000000000002 Z" fill="#3c3f41"/><path d="M405.8,128.0 L416.0,135.1 L405.8,141.70000000000002 Z" fill="#62b543"/><path d="M1055,134.8 l15,15 m0,-15 l-15,15" stroke="#6e6e6e" stroke-width="1.9" fill="none"/><circle cx="1116.3" cy="143.9" r="14.1" fill="#3e86a0"/><path d="M1120.5,140.20000000000002 A5.1,5.1 0 1 0 1120.5,147.8" stroke="#223b49" stroke-width="2.1" fill="none"/><path d="M1120.8,126.0 L1134.2,135.1 L1120.8,143.70000000000002 Z" fill="#3c3f41"/><path d="M1122.0,128.0 L1132.2,135.1 L1122.0,141.70000000000002 Z" fill="#62b543"/><path d="M1782.3,134.8 l15,15 m0,-15 l-15,15" stroke="#6e6e6e" stroke-width="1.9" fill="none"/><clipPath id="clb"><rect x="1835.6" y="129.6" width="16.5" height="28.2"/></clipPath><circle cx="1843.8" cy="143.7" r="14.1" fill="#8a97a1"/><rect x="1833.8" y="129.6" width="20" height="28.2" fill="#4e4b41"/><circle cx="1843.8" cy="143.7" r="14.1" fill="#3f89a6" clip-path="url(#clb)"/><path d="M1848.0,140.0 A5.1,5.1 0 1 0 1848.0,147.6" stroke="#223b49" stroke-width="2.1" fill="none"/><path d="M1852.6,151.89999999999998 V149.89999999999998 A2.7,2.7 0 0 1 1858.0,149.89999999999998 V151.89999999999998" stroke="#a7adb3" stroke-width="1.6" fill="none"/><rect x="1850.3" y="151.39999999999998" width="10" height="8" fill="#a7adb3"/><path d="M2188.5,134.8 l15,15 m0,-15 l-15,15" stroke="#767670" stroke-width="1.9" fill="none"/><circle cx="2250" cy="144" r="14" fill="#548a46"/><path d="M2484.3,134.8 l15,15 m0,-15 l-15,15" stroke="#6e6e6e" stroke-width="1.9" fill="none"/><circle cx="2546" cy="144" r="14" fill="#548a46"/><path d="M2554.8,152.2 V150.2 A2.7,2.7 0 0 1 2560.2,150.2 V152.2" stroke="#a7adb3" stroke-width="1.6" fill="none"/><rect x="2552.5" y="151.7" width="10" height="8" fill="#a7adb3"/><path d="M2755.3,134.8 l15,15 m0,-15 l-15,15" stroke="#6e6e6e" stroke-width="1.9" fill="none"/><path d="M2802.8,137 L2812.2,146.3 L2821.6,137" stroke="#afb1b3" stroke-width="3" fill="none"/><path d="M2816,182.5 L2823.5,189.5 L2836,175.5" stroke="#499c54" stroke-width="4.6" fill="none"/><path d="M12,243.7 H25 L28,249 H34.5 V261.5 H12 Z" fill="#afb1b3"/><rect x="23.8" y="443.5" width="8.5" height="8.6" fill="#afb1b3"/><rect x="13.7" y="453.7" width="8.2" height="8.6" fill="#afb1b3"/><rect x="23.8" y="453.7" width="8.5" height="8.6" fill="#afb1b3"/><circle cx="23" cy="614" r="6.3" stroke="#afb1b3" stroke-width="3.6" fill="none"/><path d="M9.8,614 H16 M30,614 H36.2" stroke="#afb1b3" stroke-width="3.6"/><path d="M23,1571 L26.1,1580.3 L35.8,1580.3 L28,1586.1 L30.9,1595.3 L23,1589.7 L15.1,1595.3 L18,1586.1 L10.2,1580.3 L19.9,1580.3 Z" fill="#afb1b3"/><circle cx="2863.1" cy="297" r="11.4" fill="#afb1b3"/><path d="M2867,289 L2865.6,290.9 L2862.2,291.1 L2862.2,293.6 L2858.4,295.3 L2858.4,296.7 L2866.3,296.7 L2867,300.3 L2869.3,302.9 A9.1,9.1 0 0 0 2867,289 Z" fill="#3c3f41"/><path d="M2854.2,295.1 A9.1,9.1 0 0 0 2861.7,305.6 L2861.7,304.4 L2859.9,302.3 L2859.4,300.3 Z" fill="#3c3f41"/><path d="M2851.8,483.8 A11.2,3.7 0 0 1 2874.2,483.8 V501 A11.2,3.7 0 0 1 2851.8,501 Z" fill="#afb1b3"/><path d="M2851.8,484.3 A11.2,3.7 0 0 0 2874.2,484.3 M2851.8,490 A11.2,3.7 0 0 0 2874.2,490 M2851.8,495.7 A11.2,3.7 0 0 0 2874.2,495.7" stroke="#3c3f41" stroke-width="1.4" fill="none"/><circle cx="2863.1" cy="655" r="4" fill="#afb1b3"/><path d="M2863.1,659 C2866,662 2868.2,666 2868.2,669.3 A5.1,4.9 0 0 1 2858,669.3 C2858,666 2860.2,662 2863.1,659 Z" fill="#afb1b3"/><path d="M2853,661.5 H2873.2 M2861.5,660.5 C2857.5,659 2855,656.5 2853.6,653.9 M2864.7,660.5 C2868.7,659 2871.2,656.5 2872.6,653.9 M2861,663 L2853.9,668 V674.2 M2865.2,663 L2872.3,668 V674.2" stroke="#afb1b3" stroke-width="1.9" fill="none"/><path d="M66,1634.2 H70 V1656 H66 Z M70,1646.3 H78.2 V1641.4 H73.2 L80.2,1634.2 L86.9,1641.4 H82.1 V1650 H70 Z" fill="#afb1b3"/><circle cx="202.8" cy="1642.8" r="7.9" stroke="#afb1b3" stroke-width="3.8" fill="none"/><path d="M208.6,1648.6 L215,1655" stroke="#afb1b3" stroke-width="4.4" fill="none"/><path d="M342,1635.8 L357.8,1645.2 L342,1654.5 Z" fill="#afb1b3"/><g transform="translate(482.8,1633.5) scale(0.82)" fill="#afb1b3"><path d="M6,1.2 L12.1,7.4 L18.2,1.2" stroke="#afb1b3" stroke-width="2.7" fill="none"/><path d="M3.7,13.5 A8.4,8.6 0 0 1 20.5,13.5 V20 A8.4,8.2 0 0 1 3.7,20 Z"/><rect x="0" y="9" width="24.2" height="3"/><rect x="0" y="15.2" width="24.2" height="3"/><rect x="0" y="21.3" width="24.2" height="3.6"/><rect x="8.5" y="12.4" width="7.2" height="2.5" fill="#afb1b3"/><rect x="8.5" y="18.8" width="7.2" height="2.5" fill="#afb1b3"/></g><path d="M656,1636.2 h3.8 v3.8 h-3.8 Z M662.3,1636.2 h13.6 v3.8 h-13.6 Z M656,1642.8 h3.8 v3.8 h-3.8 Z M662.3,1642.8 h13.6 v3.8 h-13.6 Z M656,1649.4 h3.8 v3.8 h-3.8 Z M662.3,1649.4 h13.6 v3.8 h-13.6 Z " fill="#afb1b3"/><path d="M823,1636.2 h23 v3.8 h-23 Z M823,1642.8 h14.5 v3.8 h-14.5 Z M823,1649.4 h18.5 v3.8 h-18.5 Z" fill="#afb1b3"/><g transform="translate(1026,1632.5) scale(0.86)" fill="#afb1b3"><path d="M0,11 L11,0 L18,2.6 L13.2,7.4 L30.4,24.2 L26.2,28.4 L9.2,11.4 L4.4,15.8 Z"/></g><path d="M1176.6,1632.8 C1179,1643 1177.5,1654.3 1163.5,1654.3 C1156.5,1654.3 1152.8,1650.5 1152.8,1646.3 C1152.8,1640 1159,1638.3 1165,1637.6 C1170,1637 1174,1636 1176.6,1632.8 Z" fill="#afb1b3"/><path d="M1153.2,1655 C1157,1651.8 1163,1649.8 1170.5,1646.5" stroke="#3c3f41" stroke-width="1.5" fill="none"/><rect x="1300" y="1634.5" width="21.8" height="19.5" fill="#afb1b3"/><path d="M1304.5,1640 L1309.5,1644.5 L1304.5,1649 M1311.5,1649.5 H1317.5" stroke="#3c3f41" stroke-width="2" fill="none"/><circle cx="2694.8" cy="1645" r="13" fill="#499c54"/><rect x="18" y="1675.7" width="17" height="16.6" stroke="#afb1b3" stroke-width="2" fill="none"/><path d="M13,1681 V1696.6 H30" stroke="#afb1b3" stroke-width="2" fill="none"/></svg>
<div class="a z4" style="left:2562px;top:1652.5px;width:316px;height:50px;background:#fff;border-radius:5px;box-shadow:0 0 0 1px #c9d3ee;"></div>
<div class="a z4" style="left:2822px;top:1653px;width:56px;height:49px;border-radius:0 5px 5px 0;background:linear-gradient(135deg,#ffffff 0%,#ece4ff 35%,#dff0ff 60%,#fff6d8 100%);"></div>
<span class="t z5" style="left:2538.5px;top:1645.6px;font-size:53px;line-height:60.9px;color:#fff;font-weight:bold;font-style:italic;transform:rotate(-9deg) scaleX(1.42);transform-origin:50% 55%;">S</span>
<span id="t71" class="t z5" style="left:2600.20px;top:1664.24px;font-size:29.5px;line-height:33.895px;color:#0a6cdc;letter-spacing:-0.716px;font-family:'Liberation Sans','Noto Sans CJK SC',sans-serif;font-weight:bold;">中</span>
<svg class="a z4" style="left:0;top:0" width="2880" height="1706" viewBox="0 0 2880 1706"><g transform="translate(2556.2,1674.2) rotate(-15.2)"><defs><linearGradient id="sg" x1="0" y1="0" x2="0.3" y2="1"><stop offset="0" stop-color="#f8763e"/><stop offset="1" stop-color="#e94e10"/></linearGradient></defs><rect x="-27" y="-24.5" width="54" height="49" rx="7" fill="url(#sg)"/></g><circle cx="2656.2" cy="1672.3" r="3.9" fill="#0a6cdc"/><circle cx="2670.6" cy="1679.5" r="3.9" fill="#0a6cdc"/><path d="M2673.5,1681 C2674,1686 2671,1689.5 2667,1691" stroke="#0a6cdc" stroke-width="2.6" fill="none"/><rect x="2704.5" y="1662.5" width="11.6" height="21" rx="5.8" fill="#0a6cdc"/><path d="M2699.6,1677 A10.7,10.7 0 0 0 2721,1677" stroke="#0a6cdc" stroke-width="2.8" fill="none"/><path d="M2710.3,1687 V1693.5 M2705,1692.3 H2715.6" stroke="#0a6cdc" stroke-width="2.8" fill="none"/><rect x="2746.8" y="1668.2" width="25.8" height="19.8" rx="3" stroke="#0a6cdc" stroke-width="2.6" fill="none"/><path d="M2750,1673.5 h3.4 m2.3,0 h3.4 m2.3,0 h3.4 m2.3,0 h3.4 M2750,1678.5 h3.4 m2.3,0 h3.4 m2.3,0 h3.4 m2.3,0 h3.4 M2753,1683.5 h13.5" stroke="#0a6cdc" stroke-width="2.8" fill="none"/><path d="M2800.5,1664.7 C2803,1669 2811,1669 2813.5,1664.7 L2821.5,1668.5 L2819.5,1677 L2815,1676 V1691.3 H2799 V1676 L2794.5,1677 L2792.6,1668.5 Z" fill="#0a6cdc"/><rect x="2842" y="1666.5" width="11" height="11" rx="2.5" fill="#0a6cdc"/><rect x="2856.2" y="1680" width="11.4" height="11" rx="2.5" fill="#0a6cdc"/><rect x="2842" y="1680" width="11" height="11" rx="2.5" fill="#0a6cdc"/><rect x="2857.6" y="1667.6" width="8.8" height="8.8" rx="2" stroke="#0a6cdc" stroke-width="2.6" fill="none"/></svg>
<span id="t72" class="t z5" style="left:2654.70px;top:1675.96px;font-size:20.5px;line-height:23.555px;color:rgba(150,150,150,0.92);letter-spacing:-1.446px;font-family:'Liberation Sans','Noto Sans CJK SC',sans-serif;text-shadow:0 0 1px #fff,0 0 2px rgba(255,255,255,.6);">CSDN @只因为你而温柔</span>
</body></html>
